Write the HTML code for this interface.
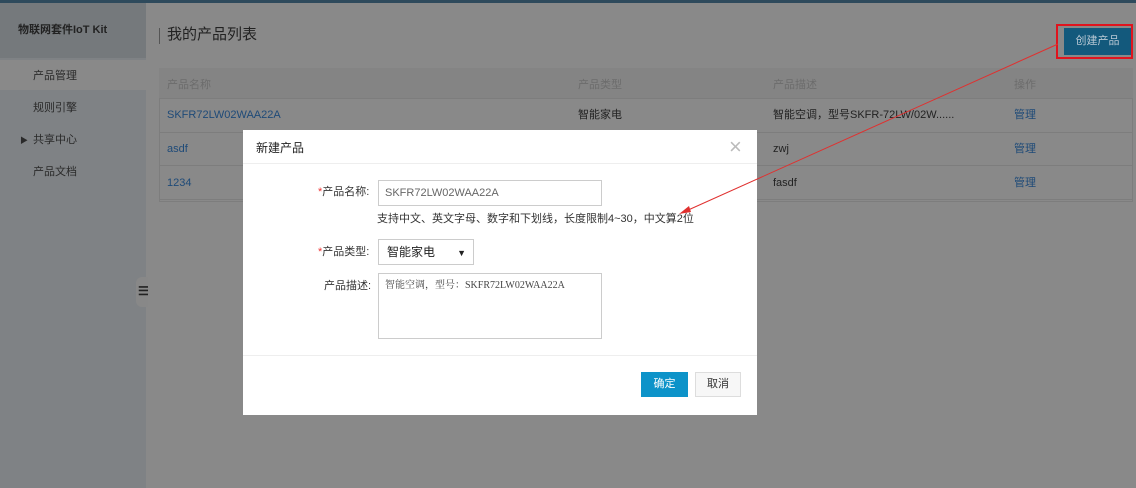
<!DOCTYPE html><html><head><meta charset="utf-8"><style>
*{margin:0;padding:0;box-sizing:border-box}
body{width:1136px;height:488px;position:relative;overflow:hidden;background:#898989;font-family:"Liberation Sans","Noto Sans CJK SC",sans-serif;font-size:11px;color:#333;line-height:14px}
.a{position:absolute}
.side{left:0;top:3px;width:146px;height:485px;background:#7f8285}
.tb{left:159px;width:974px;height:34px;border-bottom:1px solid #7d7d7d}
.link{color:#1e4a78}
</style></head><body>
<div class="a" style="left:0;top:0;width:1136px;height:3px;background:#2e4a5c"></div>
<div class="a side"></div>
<div class="a" style="left:0;top:3px;width:146px;height:55px;background:#75797c"></div>
<div class="a" style="left:18px;top:23px;font-size:11px;font-weight:bold;color:#222">物联网套件IoT Kit</div>
<div class="a" style="left:0;top:60px;width:146px;height:30px;background:#898989"></div>
<div class="a" style="left:33px;top:69px;color:#2a2a2a">产品管理</div>
<div class="a" style="left:33px;top:101px;color:#2a2a2a">规则引擎</div>
<div class="a" style="left:20px;top:134px;color:#2a2a2a;font-size:8px">▶</div>
<div class="a" style="left:33px;top:133px;color:#2a2a2a">共享中心</div>
<div class="a" style="left:33px;top:165px;color:#2a2a2a">产品文档</div>
<div class="a" style="left:136px;top:277px;width:12px;height:30px;background:#888;border-radius:6px 0 0 6px"></div>
<div class="a" style="left:138px;top:284px;font-size:12px;color:#222;font-weight:bold">☰</div>
<div class="a" style="left:159px;top:28px;width:1px;height:16px;background:#555"></div>
<div class="a" style="left:167px;top:26px;font-size:15px;color:#222;line-height:18px">我的产品列表</div>
<div class="a" style="left:1056px;top:24px;width:77px;height:35px;border:2px solid #e0141e"></div>
<div class="a" style="left:1064px;top:28px;width:67px;height:27px;background:#13597c;color:#b8c8d4;text-align:center;line-height:27px">创建产品</div>
<div class="a" style="left:159px;top:68px;width:974px;height:134px;background:#898989;border:1px solid #7d7d7d"></div>
<div class="a tb" style="top:68px;background:#848484;height:31px"></div>
<div class="a" style="left:167px;top:78px;color:#6c6c6c">产品名称</div>
<div class="a" style="left:578px;top:78px;color:#6c6c6c">产品类型</div>
<div class="a" style="left:773px;top:78px;color:#6c6c6c">产品描述</div>
<div class="a" style="left:1014px;top:78px;color:#6c6c6c">操作</div>
<div class="a tb" style="top:99px"></div><div class="a tb" style="top:132px"></div><div class="a tb" style="top:166px"></div>
<div class="a link" style="left:167px;top:108px">SKFR72LW02WAA22A</div>
<div class="a" style="left:578px;top:108px;color:#222">智能家电</div>
<div class="a" style="left:773px;top:108px;color:#222">智能空调，型号SKFR-72LW/02W......</div>
<div class="a link" style="left:1014px;top:108px">管理</div>
<div class="a link" style="left:167px;top:142px">asdf</div>
<div class="a" style="left:773px;top:142px;color:#222">zwj</div>
<div class="a link" style="left:1014px;top:142px">管理</div>
<div class="a link" style="left:167px;top:176px">1234</div>
<div class="a" style="left:773px;top:176px;color:#222">fasdf</div>
<div class="a link" style="left:1014px;top:176px">管理</div>
<div class="a" style="left:243px;top:130px;width:514px;height:285px;background:#fff"></div>
<div class="a" style="left:256px;top:141px;font-size:12px;color:#222">新建产品</div>
<div class="a" style="left:729px;top:136px;font-size:22px;color:#bbb;line-height:22px">×</div>
<div class="a" style="left:243px;top:163px;width:514px;height:1px;background:#eee"></div>
<div class="a" style="left:318px;top:185px;color:#333"><span style="color:#e33">*</span>产品名称:</div>
<div class="a" style="left:378px;top:180px;width:224px;height:26px;border:1px solid #ccc;padding:5px 6px;color:#666">SKFR72LW02WAA22A</div>
<div class="a" style="left:377px;top:212px;color:#333">支持中文、英文字母、数字和下划线，长度限制4~30，中文算2位</div>
<div class="a" style="left:318px;top:245px;color:#333"><span style="color:#e33">*</span>产品类型:</div>
<div class="a" style="left:378px;top:239px;width:96px;height:26px;border:1px solid #ccc;padding:5px 8px;color:#222;font-size:12px">智能家电<span style="position:absolute;right:7px;top:6px;font-size:9px">▼</span></div>
<div class="a" style="left:324px;top:279px;color:#333">产品描述:</div>
<div class="a" style="left:378px;top:273px;width:224px;height:66px;border:1px solid #ccc;padding:5px 6px;color:#444;font-family:'Liberation Serif','Noto Serif CJK SC',serif;font-size:10px">智能空调，型号：SKFR72LW02WAA22A</div>
<div class="a" style="left:243px;top:355px;width:514px;height:1px;background:#eee"></div>
<div class="a" style="left:641px;top:372px;width:47px;height:25px;background:#0d93c9;color:#fff;text-align:center;line-height:25px">确定</div>
<div class="a" style="left:695px;top:372px;width:46px;height:25px;border:1px solid #ddd;background:#f7f7f7;color:#333;text-align:center;line-height:23px">取消</div>
<svg class="a" style="left:0;top:0" width="1136" height="488"><line x1="1058" y1="44" x2="686" y2="211" stroke="#e0302f" stroke-width="1"/><polygon points="679,214 689,206 691,212" fill="#e0302f"/></svg>
</body></html>
